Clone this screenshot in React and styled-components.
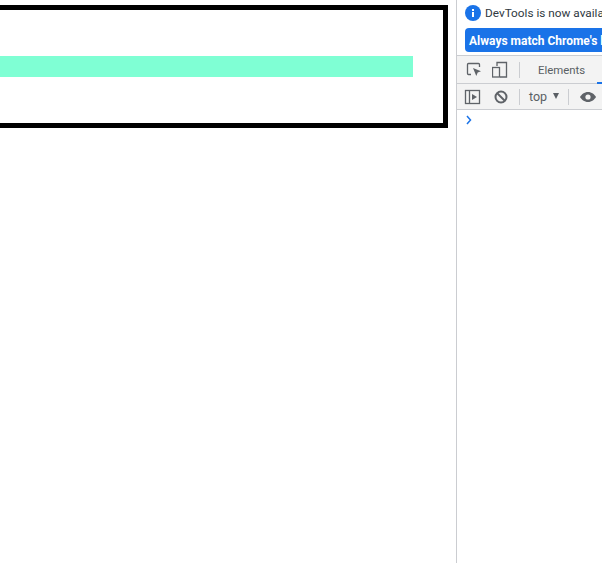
import React from "react";
import styled, { createGlobalStyle } from "styled-components";

const Global = createGlobalStyle`
  html, body { margin: 0; padding: 0; background: #fff; overflow: hidden; }
  #root { width: 602px; height: 563px; }
`;
const Page = styled.div`
  display: flex; width: 602px; height: 563px; overflow: hidden;
  font-family: "Roboto", "Liberation Sans", sans-serif;
`;
const Viewport = styled.div`
  flex: 0 0 456px; padding-top: 5px; box-sizing: border-box;
`;
const Frame = styled.div`
  width: 448px; height: 123px; box-sizing: border-box;
  border: 5px solid #000; border-left: none; padding-top: 46px;
`;
const Bar = styled.div`
  width: 413px; height: 21px; background: #7fffd4;
`;
const DevTools = styled.div`
  flex: 1; min-width: 0; border-left: 1px solid #cbcdd1; overflow: hidden;
  font-size: 12px; color: #303942; white-space: nowrap;
`;
const Info = styled.div`
  height: 26px; display: flex; align-items: center; gap: 4px; padding-left: 8px;
  font-size: 11.8px;
`;
const InfoIcon = styled.svg`
  width: 16px; height: 16px; flex: none;
`;
const MatchRow = styled.div`
  height: 29px; padding: 2px 0 0 8px; box-sizing: border-box; overflow: hidden;
`;
const MatchButton = styled.div`
  width: 160px; height: 24px; background: #1a73e8; color: #fff;
  border-radius: 4px; font-size: 12px; font-weight: 700; line-height: 26px; padding-left: 4px;
`;
const Toolbar = styled.div`
  height: ${p => p.$h}px; box-sizing: border-box; display: flex; align-items: center;
  background: #f3f3f3; border-top: ${p => (p.$top ? "1px solid #cbcdd1" : "none")};
  border-bottom: 1px solid #cbcdd1; position: relative;
`;
const IconBtn = styled.svg`
  width: 18px; height: 18px; flex: none; margin-left: ${p => p.$ml}px;
`;
const Sep = styled.div`
  width: 1px; height: 16px; background: #cbcdd1; flex: none; margin-left: ${p => p.$ml}px;
`;
const Tab = styled.div`
  margin-left: 18px; color: #5a5f64; font-size: 11.4px;
`;
const TabMark = styled.div`
  position: absolute; left: 140px; bottom: -1px; width: 10px; height: 2px; background: #1a73e8;
`;
const Context = styled.div`
  margin-left: 9px; color: #5a5f64; font-size: 12.5px;
`;
const Caret = styled.div`
  margin-left: 6px; width: 0; height: 0; flex: none; margin-top: -2px;
  border-left: 3.5px solid transparent; border-right: 3.5px solid transparent; border-top: 6px solid #5a5f64;
`;
const Prompt = styled.svg`
  display: block; width: 8px; height: 10px; margin: 5px 0 0 8px;
`;

export default function App() {
  return (
    <Page>
      <Global />
      <Viewport>
        <Frame><Bar /></Frame>
      </Viewport>
      <DevTools>
        <Info>
          <InfoIcon viewBox="0 0 16 16">
            <circle cx="8" cy="8" r="8" fill="#1a73e8" />
            <rect x="7" y="7" width="2" height="5" fill="#fff" />
            <rect x="7" y="4" width="2" height="2" fill="#fff" />
          </InfoIcon>
          <span>DevTools is now available in your language</span>
        </Info>
        <MatchRow>
          <MatchButton>Always match Chrome's language</MatchButton>
        </MatchRow>
        <Toolbar $h={29} $top>
          <IconBtn $ml={8} viewBox="0 0 18 18" fill="none">
            <path d="M6 13.500H3.500a1 1 0 0 1-1-1V3.500a1 1 0 0 1 1-1h10a1 1 0 0 1 1 1V6" stroke="#5f6368" strokeWidth="1.300" />
            <path d="M8 7l8 3.200-3.300 1.300L11.300 15z" fill="#5f6368" />
          </IconBtn>
          <IconBtn $ml={9} viewBox="0 0 18 18" fill="none">
            <path d="M5 5V1.500h9.500v14.500H8" stroke="#5f6368" strokeWidth="1.300" />
            <rect x="0.500" y="6.500" width="7" height="9.500" stroke="#5f6368" strokeWidth="1.300" />
          </IconBtn>
          <Sep $ml={9} />
          <Tab>Elements</Tab>
          <TabMark />
        </Toolbar>
        <Toolbar $h={26}>
          <IconBtn $ml={7} viewBox="0 0 18 18" fill="none">
            <rect x="1.500" y="2.500" width="14" height="13" stroke="#5f6368" strokeWidth="1.300" />
            <path d="M5.500 3v12" stroke="#5f6368" strokeWidth="1.300" />
            <path d="M8 6l5 3-5 3z" fill="#5f6368" />
          </IconBtn>
          <IconBtn $ml={10} viewBox="0 0 18 18" fill="none">
            <circle cx="9" cy="9" r="5.500" stroke="#5f6368" strokeWidth="2" />
            <path d="M5 5l8 8" stroke="#5f6368" strokeWidth="2" />
          </IconBtn>
          <Sep $ml={9} />
          <Context>top</Context>
          <Caret />
          <Sep $ml={9} />
          <IconBtn $ml={10} viewBox="0 0 18 18">
            <path d="M9 4C5.200 4 2.500 6.500 1 9c1.500 2.500 4.200 5 8 5s6.500-2.500 8-5c-1.500-2.500-4.200-5-8-5z" fill="#5f6368" />
            <circle cx="9" cy="9" r="2.600" fill="#f3f3f3" />
          </IconBtn>
        </Toolbar>
        <Prompt viewBox="0 0 8 10" fill="none">
          <path d="M2 1l3.500 4L2 9" stroke="#1a73e8" strokeWidth="1.500" />
        </Prompt>
      </DevTools>
    </Page>
  );
}
